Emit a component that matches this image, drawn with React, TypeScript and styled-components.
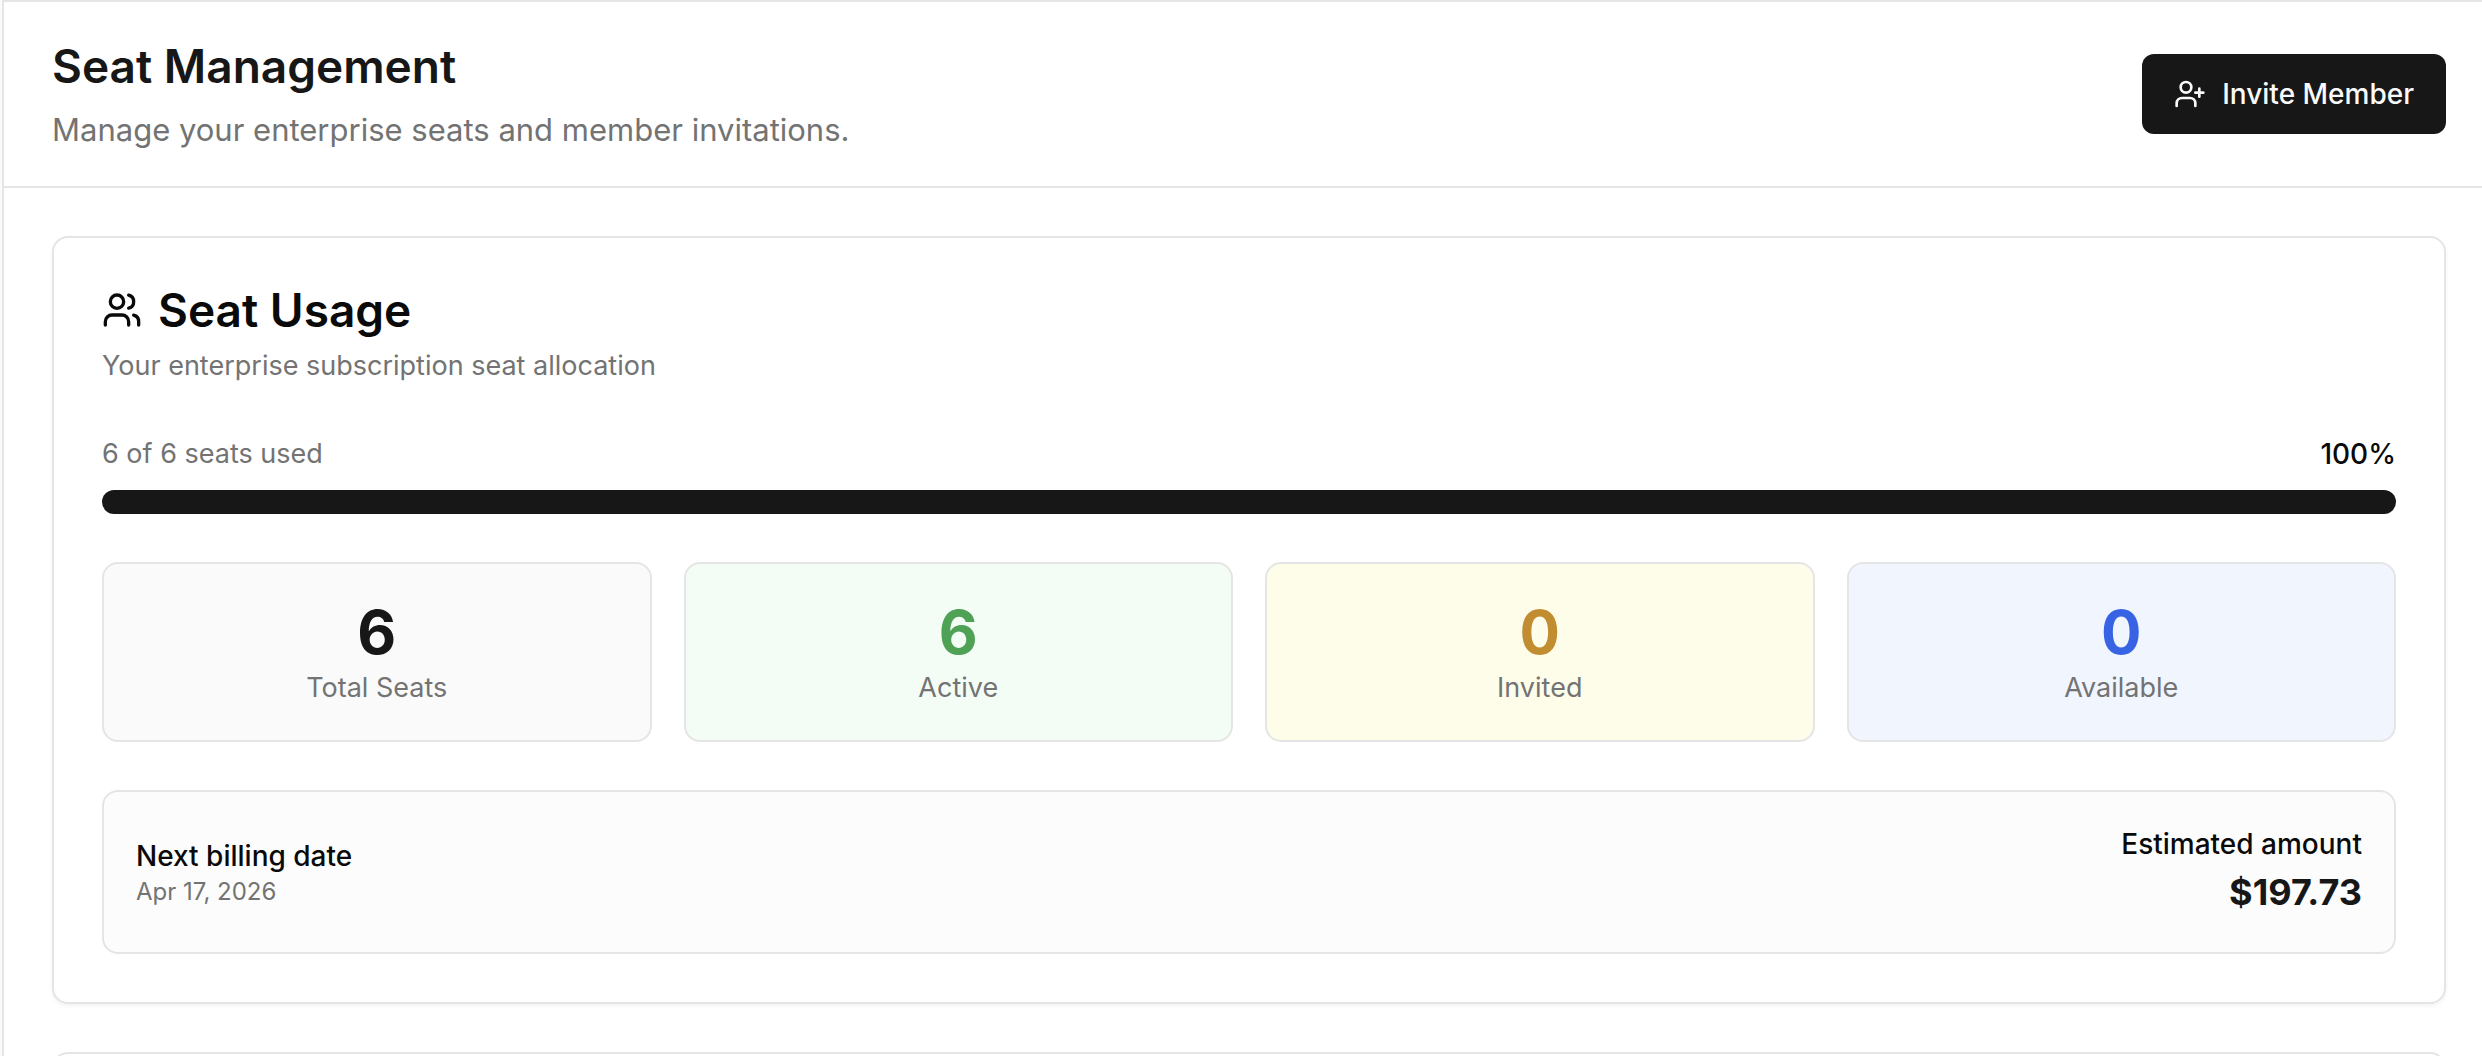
import React from "react";
import styled, { createGlobalStyle } from "styled-components";
import { UserPlus, Users } from "lucide-react";

const GlobalStyle = createGlobalStyle`
  *, *::before, *::after { box-sizing: border-box; }
  body {
    margin: 0;
    background: #fafafa;
    color: #0a0a0a;
    font-family: Inter, "Liberation Sans", sans-serif;
    font-size: 28px;
    line-height: 40px;
    -webkit-font-smoothing: antialiased;
  }
  h1, h2, p, dl, dt, dd { margin: 0; }
`;

const Page = styled.main`
  height: 100vh;
  margin-left: 2px;
  overflow: hidden;
  border-top: 2px solid #e5e5e5;
  border-left: 2px solid #e5e5e5;
  background: #ffffff;
`;

const Header = styled.header`
  display: flex;
  align-items: center;
  justify-content: space-between;
  padding: 32px 36px 32px 48px;
  border-bottom: 2px solid #e5e5e5;
`;

const HeaderText = styled.div`
  display: grid;
  gap: 8px;
`;

const PageTitle = styled.h1`
  color: #171717;
  font-size: 46px;
  font-weight: 600;
  line-height: 64px;
`;

const PageLead = styled.p`
  color: #737373;
  font-size: 31px;
  line-height: 48px;
`;

const InviteButton = styled.button`
  display: inline-flex;
  align-items: center;
  gap: 16px;
  height: 80px;
  padding: 0 32px;
  border: 0;
  border-radius: 12px;
  background: #171717;
  color: #fafafa;
  font: inherit;
  font-weight: 500;
  cursor: pointer;
`;

const Content = styled.div`
  display: grid;
  gap: 48px;
  padding: 48px 36px 0 48px;
`;

const Card = styled.section`
  padding: 48px;
  border: 2px solid #e5e5e5;
  border-radius: 16px;
  background: #ffffff;
  box-shadow: 0 2px 4px rgba(0, 0, 0, 0.05);
`;

const CardHeader = styled.div`
  display: grid;
  gap: 12px;
  margin-bottom: 48px;
`;

const CardTitle = styled.h2`
  display: flex;
  align-items: center;
  gap: 16px;
  font-size: 46px;
  font-weight: 600;
  line-height: 48px;
`;

const Muted = styled.p`
  color: #737373;
  font-size: 27px;
`;

const CardBody = styled.div`
  display: grid;
  gap: 48px;
`;

const Usage = styled.div`
  display: grid;
  gap: 16px;
`;

const UsageRow = styled.div`
  display: flex;
  justify-content: space-between;
`;

const Strong = styled.p`
  font-weight: 500;
`;

const Track = styled.div`
  height: 24px;
  overflow: hidden;
  border-radius: 12px;
  background: #e5e5e5;
`;

const Fill = styled.div`
  height: 100%;
  background: #171717;
`;

const Stats = styled.dl`
  display: grid;
  grid-template-columns: repeat(4, 1fr);
  gap: 32px;
`;

const Stat = styled.div<{ $tint: string }>`
  display: flex;
  flex-direction: column-reverse;
  padding: 32px;
  border: 2px solid #e5e5e5;
  border-radius: 16px;
  background: ${(p) => p.$tint};
  text-align: center;
`;

const StatLabel = styled.dt`
  color: #737373;
  font-size: 27px;
`;

const StatValue = styled.dd<{ $color: string }>`
  color: ${(p) => p.$color};
  font-size: 60px;
  font-weight: 700;
  line-height: 72px;
`;

const Billing = styled.div`
  display: flex;
  align-items: center;
  justify-content: space-between;
  padding: 32px;
  border: 2px solid #e5e5e5;
  border-radius: 16px;
  background: #fcfcfc;
`;

const BillingDate = styled.p`
  color: #737373;
  font-size: 24px;
  line-height: 32px;
`;

const BillingAmount = styled.div`
  text-align: right;
`;

const Amount = styled.p`
  color: #171717;
  font-size: 36px;
  font-weight: 700;
  line-height: 56px;
`;

const seats = { used: 6, total: 6 };
const percent = Math.round((seats.used / seats.total) * 100);

const stats = [
  { label: "Total Seats", value: 6, color: "#171717", tint: "#fafafa" },
  { label: "Active", value: 6, color: "#4ea155", tint: "#f3fdf5" },
  { label: "Invited", value: 0, color: "#c28d31", tint: "#fefdea" },
  { label: "Available", value: 0, color: "#3763e4", tint: "#f0f5fe" },
];

export default function App() {
  return (
    <>
      <GlobalStyle />
      <Page>
        <Header>
          <HeaderText>
            <PageTitle>Seat Management</PageTitle>
            <PageLead>Manage your enterprise seats and member invitations.</PageLead>
          </HeaderText>
          <InviteButton type="button">
            <UserPlus size={32} aria-hidden />
            Invite Member
          </InviteButton>
        </Header>
        <Content>
          <Card>
            <CardHeader>
              <CardTitle>
                <Users size={40} aria-hidden />
                Seat Usage
              </CardTitle>
              <Muted>Your enterprise subscription seat allocation</Muted>
            </CardHeader>
            <CardBody>
              <Usage>
                <UsageRow>
                  <Muted>
                    {seats.used} of {seats.total} seats used
                  </Muted>
                  <Strong>{percent}%</Strong>
                </UsageRow>
                <Track role="progressbar" aria-label="Seats used" aria-valuenow={percent}>
                  <Fill style={{ width: `${percent}%` }} />
                </Track>
              </Usage>
              <Stats>
                {stats.map((s) => (
                  <Stat key={s.label} $tint={s.tint}>
                    <StatLabel>{s.label}</StatLabel>
                    <StatValue $color={s.color}>{s.value}</StatValue>
                  </Stat>
                ))}
              </Stats>
              <Billing>
                <div>
                  <Strong>Next billing date</Strong>
                  <BillingDate>Apr 17, 2026</BillingDate>
                </div>
                <BillingAmount>
                  <Strong>Estimated amount</Strong>
                  <Amount>$197.73</Amount>
                </BillingAmount>
              </Billing>
            </CardBody>
          </Card>
          <Card />
        </Content>
      </Page>
    </>
  );
}
